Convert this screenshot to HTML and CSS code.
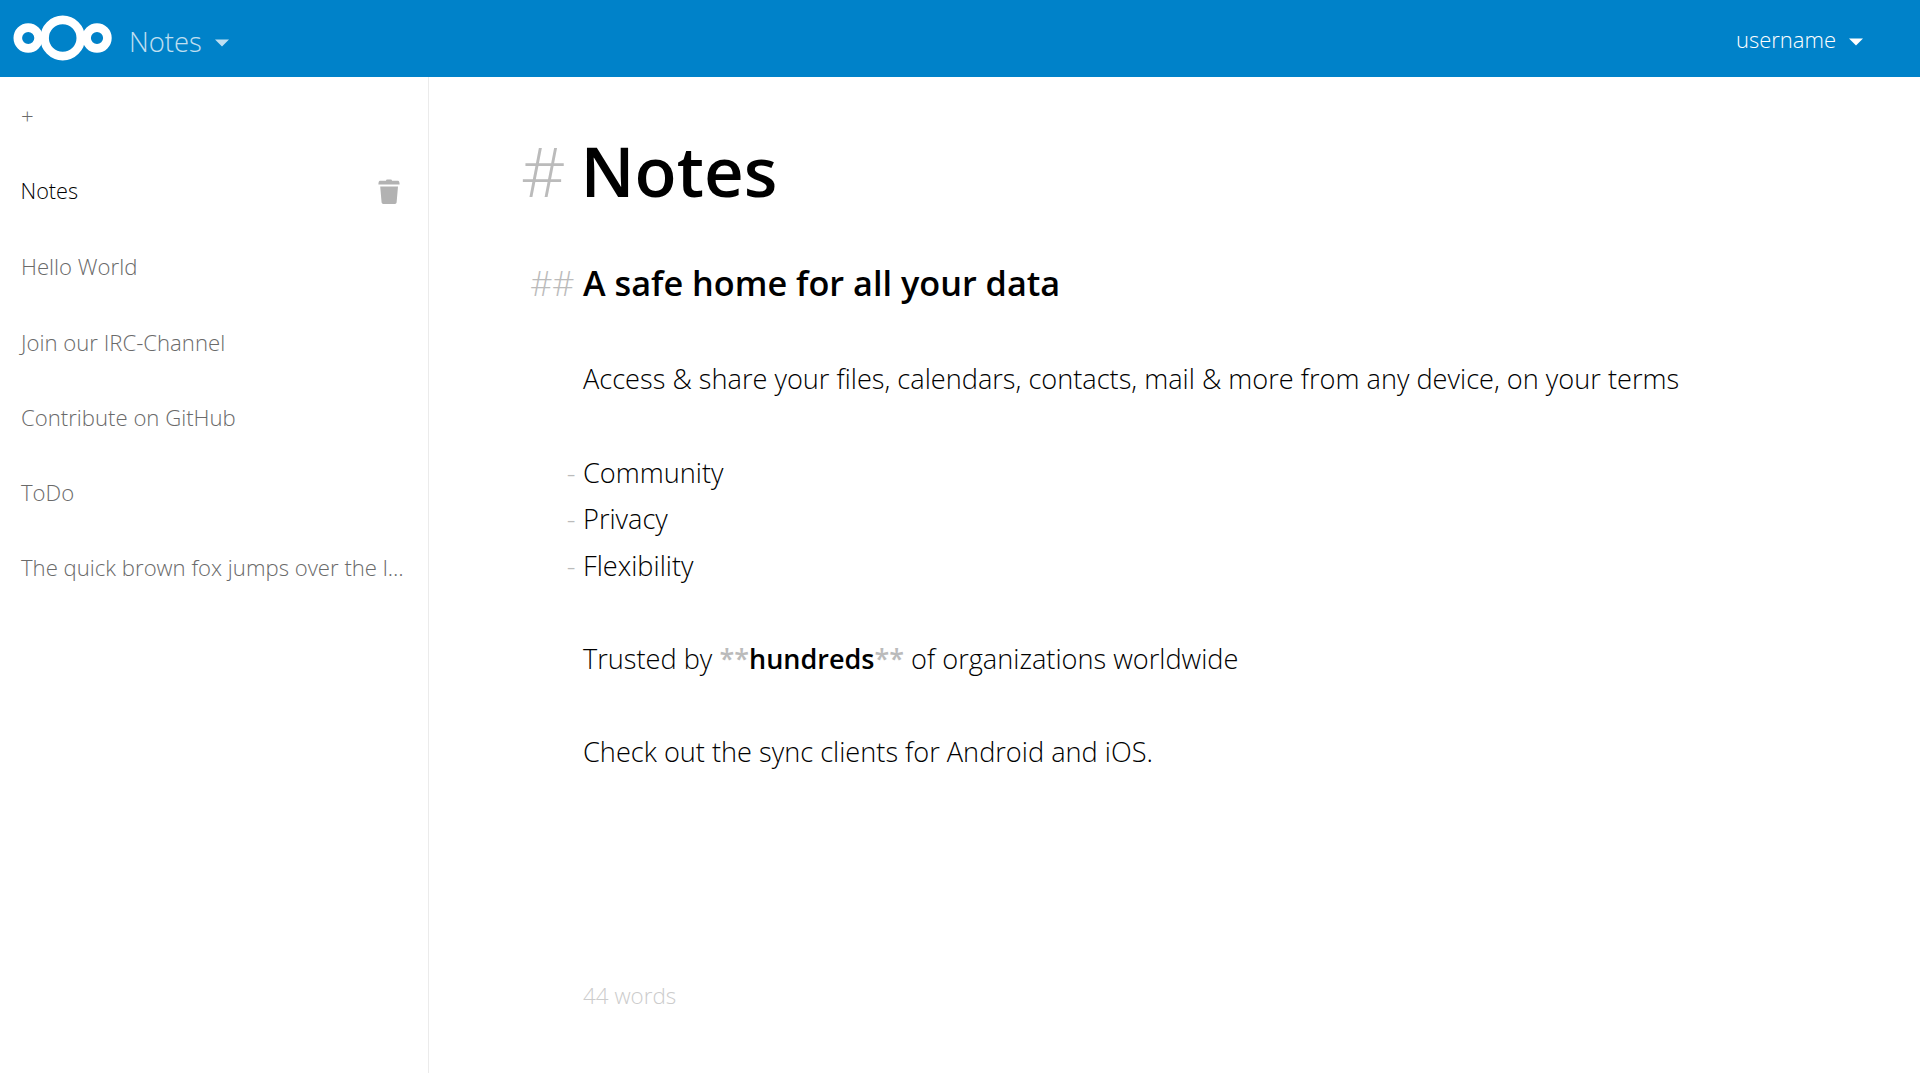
FILE: index.html
```html
<!DOCTYPE html>
<html lang="en">
<head>
<meta charset="utf-8">
<title>Notes</title>
<link rel="stylesheet" href="styles.css">
</head>
<body>
<header class="header">
  <div class="brand">
    <svg class="logo" width="100" height="48" viewBox="0 0 100 48" fill="none" stroke="#fff" stroke-width="8.6">
      <circle cx="15.2" cy="24" r="10.4"/>
      <circle cx="49.7" cy="24" r="18.1"/>
      <circle cx="84" cy="24" r="10.4"/>
    </svg>
    <span class="app-name">Notes</span>
    <svg class="caret caret-app" width="14" height="8" viewBox="0 0 14 8"><path d="M0 0.5h14l-7 7z" fill="#fff"/></svg>
  </div>
  <div class="user">
    <span class="user-name">username</span>
    <svg class="caret" width="14" height="8" viewBox="0 0 14 8"><path d="M0 0.5h14l-7 7z" fill="#fff"/></svg>
  </div>
</header>
<div class="content">
  <nav class="sidebar">
    <a class="item add">+</a>
    <a class="item active"><span class="title">Notes</span>
      <svg class="trash" width="22" height="26" viewBox="0 0 22 26" fill="#b2b2b2"><path d="M8 1.8Q8 .6 9.2 .6h3.6Q14 .6 14 1.8h6Q21.6 2 21.6 5.6H.4Q.4 2 2 1.8zM2.2 7.6h17.8L18.6 23.6Q18.4 25 17 25H5.2Q3.800 25 3.600 23.600z"/></svg>
    </a>
    <a class="item"><span class="title">Hello World</span></a>
    <a class="item"><span class="title">Join our IRC-Channel</span></a>
    <a class="item"><span class="title">Contribute on GitHub</span></a>
    <a class="item"><span class="title">ToDo</span></a>
    <a class="item"><span class="title">The quick brown fox jumps over the l…</span></a>
  </nav>
  <main class="editor">
    <h1 class="line h1"><span class="mark">#</span>Notes</h1>
    <h2 class="line h2"><span class="mark">##</span>A safe home for all your data</h2>
    <p class="line">Access &amp; share your files, calendars, contacts, mail &amp; more from any device, on your terms</p>
    <ul class="list">
      <li class="line"><span class="mark">-</span>Community</li>
      <li class="line"><span class="mark">-</span>Privacy</li>
      <li class="line"><span class="mark">-</span>Flexibility</li>
    </ul>
    <p class="line">Trusted by <b class="strong"><span class="token">**</span>hundreds<span class="token">**</span></b> of organizations worldwide</p>
    <p class="line">Check out the sync clients for Android and iOS.</p>
    <div class="words">44 words</div>
  </main>
</div>
</body>
</html>
```
FILE: styles.css
```css
* { box-sizing: border-box; margin: 0; padding: 0; }
body {
  height: 100vh;
  display: flex;
  flex-direction: column;
  overflow: hidden;
  background: #fff;
  color: #000;
  font-family: "Open Sans", "Noto Sans", sans-serif;
  font-weight: 300;
}
.header {
  flex: none;
  height: 77px;
  display: flex;
  justify-content: space-between;
  background: #0082c9;
  color: #fff;
}
.brand { display: flex; align-items: center; padding-left: 13px; }
.logo { margin-top: -2px; }
.app-name { margin: 6px 0 0 16px; font-size: 27.4px; opacity: .75; }
.caret { display: block; margin: 6px 0 0 13px; }
.caret-app { margin-top: 8px; opacity: .75; }
.user { display: flex; align-items: center; padding-right: 57px; }
.user-name { margin-top: 1px; font-size: 22px; }
.content { flex: 1; display: flex; }
.sidebar {
  flex: none;
  width: 429px;
  padding: 1px 24px 0 21px;
  border-right: 1px solid #ebebeb;
  font-size: 22.15px;
}
.item { display: flex; align-items: center; justify-content: space-between; height: 75.3px; color: #6a6a6a; }
.add { padding-bottom: 2px; }
.active { color: #000; }
.active .title { font-size: 21.7px; margin-left: -0.5px; }
.title { white-space: nowrap; }
.trash { margin: 2px 4px 0 0; }
.editor { flex: 1; padding: 47px 0 0 154px; font-size: 27.16px; line-height: 46.5px; }
.line { display: flex; white-space: pre; height: 46.5px; margin-bottom: 46.5px; list-style: none; }
.mark { width: 70px; margin-left: -70px; padding-right: 8.5px; text-align: right; color: #bbb; font-weight: 300; }
.h1 { height: 93px; margin: 0 0 43px -2.5px; font-size: 69px; line-height: 93px; font-weight: 600; }
.h1 .mark { padding-right: 15px; }
.h2 { font-size: 34.25px; font-weight: 600; margin-bottom: 49px; }
.list { margin: 47.5px 0 46.5px; }
.list .line { margin-bottom: 0; }
.list .mark { padding-right: 7.5px; }
.strong { font-weight: 600; font-size: 27px; }
.token { color: #bbb; }
.words { margin-top: 198px; font-size: 22.4px; color: #ccc; }
```
